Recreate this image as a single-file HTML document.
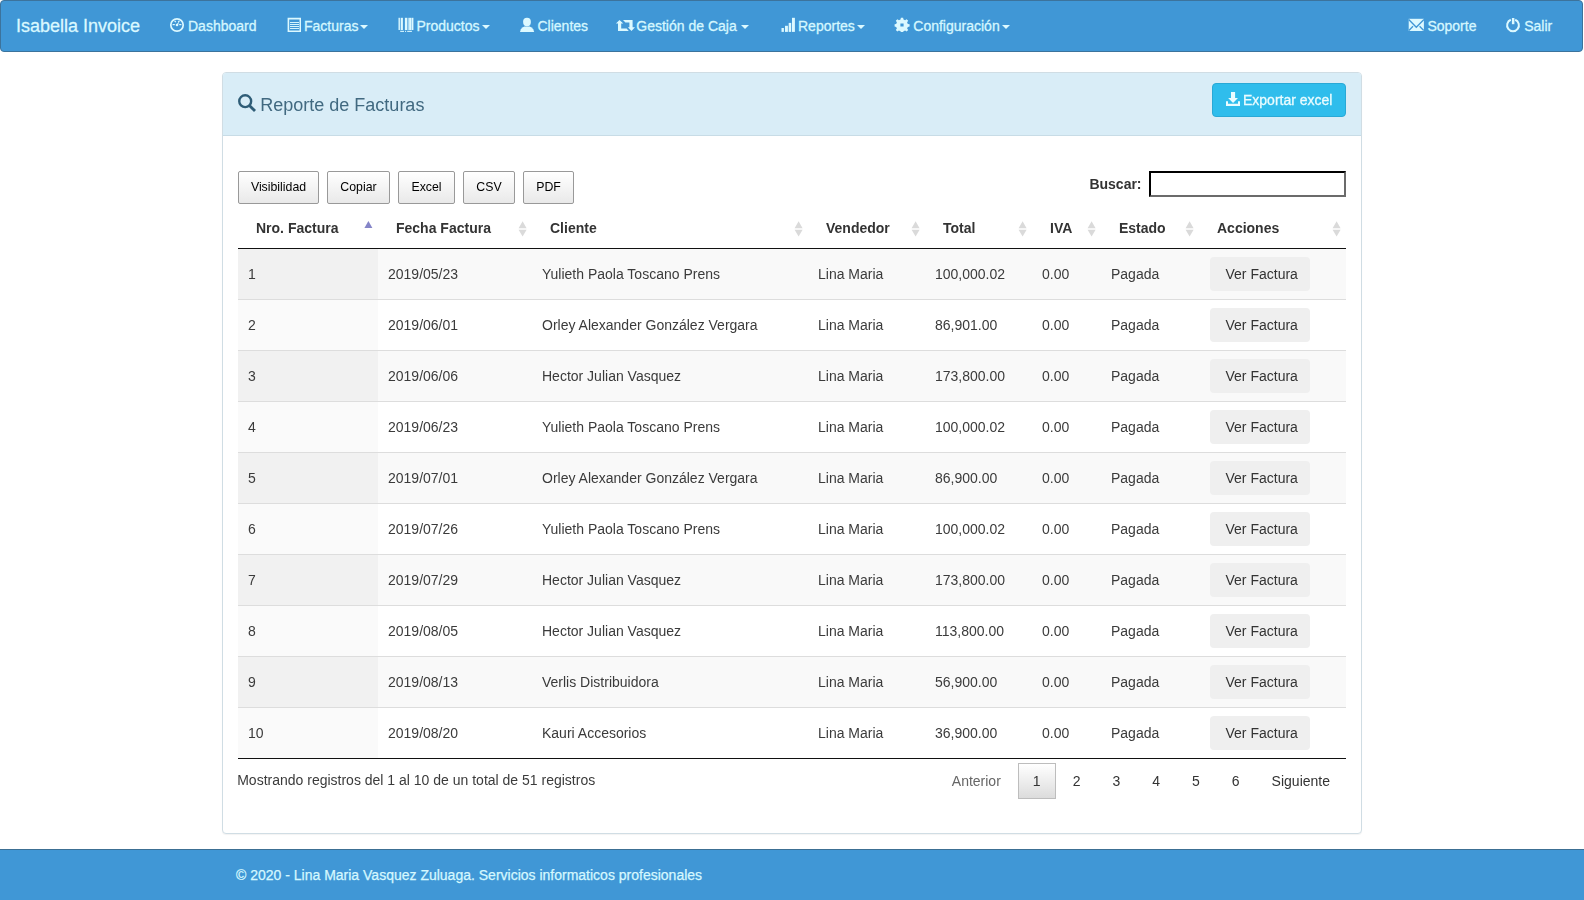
<!DOCTYPE html>
<html><head><meta charset="utf-8">
<style>
*{box-sizing:border-box;}
html,body{margin:0;padding:0;}
body{width:1584px;height:900px;overflow:hidden;position:relative;background:#fff;font-family:"Liberation Sans",sans-serif;font-size:14px;line-height:20px;color:#333;}
.navbar{position:absolute;left:0;top:0;width:1583px;height:52px;background:#4097d6;border:1px solid #3c739c;border-radius:4px;}
.nav{-webkit-text-stroke:0.3px #d6f7ff;position:absolute;top:16px;height:20px;line-height:20px;color:#d4f8ff;white-space:nowrap;font-size:14px;}
.brand{-webkit-text-stroke:0.3px #d6f7ff;position:absolute;top:15px;left:15px;line-height:20px;font-size:18px;color:#dcf9ff;white-space:nowrap;}
.ic{display:inline-block;width:14px;height:14px;vertical-align:top;position:relative;top:2px;}
.caret{display:inline-block;width:0;height:0;margin-left:2px;vertical-align:middle;border-top:4px solid #dcf9ff;border-right:4px solid transparent;border-left:4px solid transparent;}
.panel{position:absolute;left:222px;top:72px;width:1140px;height:762px;border:1px solid #d0dde4;border-radius:4px;background:#fff;box-shadow:0 1px 1px rgba(0,0,0,.05);}
.ph{position:absolute;left:223px;top:73px;width:1138px;height:63px;background:#d9edf7;border-bottom:1px solid #c8dce6;border-radius:3px 3px 0 0;}
.ptitle{position:absolute;left:260.3px;top:94.5px;font-size:18px;line-height:20px;color:#416980;white-space:nowrap;}
.btninfo{position:absolute;left:1212px;top:83px;width:134px;height:34px;background:#2fbdec;border:1px solid #29a9d6;border-radius:4px;}
.btntext{-webkit-text-stroke:0.3px #eafcff;position:absolute;left:1243px;top:90px;line-height:20px;color:#eafcff;white-space:nowrap;}
.dtb{position:absolute;top:171px;height:33px;border:1px solid #999;border-radius:2px;background:linear-gradient(to bottom,#fff 0%,#e9e9e9 100%);font-size:12.32px;line-height:19.7px;padding:6px 0;color:#000;white-space:nowrap;text-align:center;}
.flt{position:absolute;top:173.65px;left:1089.4px;font-weight:bold;white-space:nowrap;line-height:20px;color:#333;}
.inp{position:absolute;left:1149px;top:171px;width:197px;height:26px;border:2px solid #000;border-right-color:#6b6b6b;border-bottom-color:#6b6b6b;background:#fff;}
table.dt{position:absolute;left:238px;top:208px;width:1108px;border-collapse:separate;border-spacing:0;table-layout:fixed;}
table.dt th{font-weight:bold;text-align:left;padding:10px 18px;height:41px;border-bottom:1px solid #111;position:relative;line-height:20px;}
table.dt td{color:#3b3b3b;padding:8px 10px;height:50px;vertical-align:middle;border-top:1px solid #ddd;line-height:20px;white-space:nowrap;}
table.dt tbody tr:first-child td{border-top:none;height:50px;}
table.dt tbody tr:not(:first-child) td{height:51px;}
table.dt tr.odd{background:#f9f9f9;}
table.dt tr.odd td.s1{background:#f1f1f1;}
table.dt tr.even td.s1{background:#fafafa;}
table.dt tbody tr:last-child td{border-bottom:1px solid #111;height:52px;}
.vb{display:inline-block;margin-left:1px;width:100px;height:34px;background:#efefef;border-radius:4px;padding:7px 0 7px 15.5px;line-height:20px;color:#333;white-space:nowrap;}
.sort{position:absolute;right:0;top:11px;width:19px;height:19px;}
.info{color:#3b3b3b;position:absolute;left:237.2px;top:769.6px;line-height:20px;white-space:nowrap;}
.pgw{position:absolute;right:239px;top:763px;display:flex;}
.pg{display:inline-block;min-width:21px;height:36px;padding:7px 14px;margin-left:2px;border:1px solid transparent;border-radius:2px;line-height:20px;color:#333;white-space:nowrap;text-align:center;}
.pg.dis{color:#666;}
.pg.cur{border:1px solid #bdbdbd;border-radius:0;background:linear-gradient(to bottom,#fff 0%,#dcdcdc 100%);}
.footer{position:absolute;left:0;top:849px;width:1584px;height:51px;background:#4097d6;border-top:1px solid #3c6f93;}
.ftext{-webkit-text-stroke:0.25px #dcf9ff;position:absolute;left:236px;top:864.5px;color:#d2f8ff;white-space:nowrap;line-height:20px;}
.wrap{position:absolute;left:0;top:0;width:1584px;height:900px;will-change:transform;}
</style></head><body>
<div class="navbar">
  <div class="brand">Isabella Invoice</div>
</div>
<svg class="navsvg" width="1584" height="52" viewBox="0 0 1584 52" style="position:absolute;left:0;top:0" fill="#dcf9ff">
<!-- dashboard -->
<circle cx="177" cy="25" r="6.2" fill="none" stroke="#dcf9ff" stroke-width="1.7"/>
<rect x="172.6" y="24" width="2.2" height="1.2"/>
<rect x="179.2" y="24" width="2.2" height="1.2"/>
<path d="M174.2,21.4 l0.9,-0.9 l1.2,1.2 l-0.9,0.9z M179.8,21.4 l-0.9,-0.9 l-1.2,1.2 l0.9,0.9z"/>
<circle cx="177" cy="25" r="1.3"/>
<path d="M176.3,24.6 L177.6,25.4 L179.6,21.2 Z"/>
<!-- list-alt -->
<path fill-rule="evenodd" d="M287.6,17.8 H301 V32 H287.6 Z M289.2,19.6 V30.5 H299.5 V19.6 Z"/>
<rect x="290" y="22" width="9" height="1" shape-rendering="crispEdges" opacity="0.95"/>
<rect x="290" y="24" width="9" height="1" shape-rendering="crispEdges" opacity="0.95"/>
<rect x="290" y="26" width="9" height="1" shape-rendering="crispEdges" opacity="0.95"/>
<rect x="290" y="28" width="9" height="1" shape-rendering="crispEdges" opacity="0.95"/>
<!-- barcode -->
<rect x="398.5" y="17.8" width="1.4" height="12.2"/>
<rect x="400.7" y="17.8" width="2.2" height="12.2"/>
<rect x="404.9" y="17.8" width="2.2" height="12.2"/>
<rect x="407.7" y="17.8" width="0.9" height="12.2"/>
<rect x="409.1" y="17.8" width="1.9" height="12.2"/>
<rect x="411.4" y="17.8" width="2" height="12.2"/>
<rect x="400.2" y="30.8" width="3.8" height="1.1"/>
<rect x="405" y="30.8" width="1.1" height="1.1"/>
<rect x="407.2" y="30.8" width="4.7" height="1.1"/>
<!-- user -->
<ellipse cx="527" cy="22" rx="3.9" ry="4.2"/>
<path d="M520,32 L534.2,32 L533.2,29.2 Q532,27.4 529.6,26.6 L524.4,26.6 Q522,27.4 520.9,29.2 Z"/>
<!-- retweet -->
<path d="M619.5,19.9 L623.3,23.6 L621.2,23.6 L621.2,28.4 L626.6,28.4 L628.8,31 L618,31 L618,23.6 L615.9,23.6 Z"/>
<path d="M631.5,31 L635,27.3 L632.6,27.3 L632.6,19.9 L623,19.9 L625.4,22.5 L629.4,22.5 L629.4,27.3 L627.8,27.3 Z"/>
<!-- signal -->
<rect x="781.5" y="28" width="2.4" height="3.9"/>
<rect x="785" y="25.8" width="2.9" height="6.1"/>
<rect x="788.7" y="22.9" width="2.5" height="9"/>
<rect x="792" y="17.8" width="2.9" height="14.1"/>
<!-- cog -->
<path fill-rule="evenodd" d="M900.9,17.8 H903.1 L903.5,19.6 L905.1,20.3 L906.6,19.2 L908.2,20.8 L907.1,22.3 L907.8,23.9 L909.6,24.3 V26.5 L907.8,26.9 L907.1,28.5 L908.2,30 L906.6,31.6 L905.1,30.5 L903.5,31.2 L903.1,32 H900.9 L900.5,31.2 L898.9,30.5 L897.4,31.6 L895.8,30 L896.9,28.5 L896.2,26.9 L894.6,26.5 V24.3 L896.2,23.9 L896.9,22.3 L895.8,20.8 L897.4,19.2 L898.9,20.3 L900.5,19.6 Z M900.4,23.5 H903.6 V26.5 H900.4 Z"/>
<!-- envelope -->
<path d="M1408.7,18.8 H1423.9 V31 H1408.7 Z" />
<path d="M1408.7,19.6 L1416.3,27.2 L1423.9,19.6 M1408.9,30.4 L1413,26.3 M1423.7,30.4 L1419.6,26.3" fill="none" stroke="#4097d6" stroke-width="1.35"/>
<!-- off -->
<path d="M1510.8,19.8 A5.9,5.9 0 1 0 1515.2,19.8" fill="none" stroke="#dcf9ff" stroke-width="2"/>
<rect x="1511.9" y="18" width="2.5" height="6.2"/>
</svg>
<div class="nav" style="left:188px">Dashboard</div>
<div class="nav" style="left:304px">Facturas<span class="caret"></span></div>
<div class="nav" style="left:416.5px">Productos<span class="caret"></span></div>
<div class="nav" style="left:537.5px">Clientes</div>
<div class="nav" style="left:636.3px">Gestión de Caja <span class="caret" style="margin-left:0;border-width:4.5px 4.5px 0 4.5px"></span></div>
<div class="nav" style="left:798px">Reportes<span class="caret"></span></div>
<div class="nav" style="left:913.3px">Configuración<span class="caret"></span></div>
<div class="nav" style="left:1427.4px">Soporte</div>
<div class="nav" style="left:1524.2px">Salir</div>

<div class="wrap">
<div class="panel"></div>
<div class="ph"></div>
<svg width="20" height="20" viewBox="0 0 20 20" style="position:absolute;left:237px;top:93px">
<circle cx="8.2" cy="8.2" r="5.95" fill="none" stroke="#2f5d77" stroke-width="2.4"/>
<path d="M11.4,13.4 L13.4,11.4 L19,17 L17,19Z" fill="#2f5d77"/>
</svg>
<div class="ptitle">Reporte de Facturas</div>
<div class="btninfo"></div>
<svg width="16" height="16" viewBox="0 0 16 16" style="position:absolute;left:1225px;top:90px" fill="#eafcff">
<path d="M6,2 H10.1 V8 H13 L8.05,13 L3.1,8 H6Z"/>
<path d="M1,11.3 H3 V13.8 H13 V11.3 H15 V15.9 H1Z"/>
</svg>
<div class="btntext">Exportar excel</div>
<div class="dtb" style="left:238px;width:81px">Visibilidad</div>
<div class="dtb" style="left:327px;width:63px">Copiar</div>
<div class="dtb" style="left:398px;width:57px">Excel</div>
<div class="dtb" style="left:463px;width:52px">CSV</div>
<div class="dtb" style="left:523px;width:51px">PDF</div>
<div class="flt">Buscar:</div>
<div class="inp"></div>
<table class="dt"><thead><tr><th style="width:140px">Nro. Factura<svg class="sort" width="19" height="19" viewBox="0 0 19 19"><path d="M9.4,2 L13.4,9 L5.4,9Z" fill="#8585c8"/></svg></th><th style="width:154px">Fecha Factura<svg class="sort" width="19" height="19" viewBox="0 0 19 19"><path d="M9.6,2.2 L13.6,9.2 L5.6,9.2Z M5.6,10.7 L13.6,10.7 L9.6,17.4Z" fill="#dadada"/></svg></th><th style="width:276px">Cliente<svg class="sort" width="19" height="19" viewBox="0 0 19 19"><path d="M9.6,2.2 L13.6,9.2 L5.6,9.2Z M5.6,10.7 L13.6,10.7 L9.6,17.4Z" fill="#dadada"/></svg></th><th style="width:117px">Vendedor<svg class="sort" width="19" height="19" viewBox="0 0 19 19"><path d="M9.6,2.2 L13.6,9.2 L5.6,9.2Z M5.6,10.7 L13.6,10.7 L9.6,17.4Z" fill="#dadada"/></svg></th><th style="width:107px">Total<svg class="sort" width="19" height="19" viewBox="0 0 19 19"><path d="M9.6,2.2 L13.6,9.2 L5.6,9.2Z M5.6,10.7 L13.6,10.7 L9.6,17.4Z" fill="#dadada"/></svg></th><th style="width:69px">IVA<svg class="sort" width="19" height="19" viewBox="0 0 19 19"><path d="M9.6,2.2 L13.6,9.2 L5.6,9.2Z M5.6,10.7 L13.6,10.7 L9.6,17.4Z" fill="#dadada"/></svg></th><th style="width:98px">Estado<svg class="sort" width="19" height="19" viewBox="0 0 19 19"><path d="M9.6,2.2 L13.6,9.2 L5.6,9.2Z M5.6,10.7 L13.6,10.7 L9.6,17.4Z" fill="#dadada"/></svg></th><th style="width:147px">Acciones<svg class="sort" width="19" height="19" viewBox="0 0 19 19"><path d="M9.6,2.2 L13.6,9.2 L5.6,9.2Z M5.6,10.7 L13.6,10.7 L9.6,17.4Z" fill="#dadada"/></svg></th></tr></thead><tbody>
<tr class="odd"><td class="s1">1</td><td>2019/05/23</td><td>Yulieth Paola Toscano Prens</td><td>Lina Maria</td><td>100,000.02</td><td>0.00</td><td>Pagada</td><td><span class="vb">Ver Factura</span></td></tr>
<tr class="even"><td class="s1">2</td><td>2019/06/01</td><td>Orley Alexander González Vergara</td><td>Lina Maria</td><td>86,901.00</td><td>0.00</td><td>Pagada</td><td><span class="vb">Ver Factura</span></td></tr>
<tr class="odd"><td class="s1">3</td><td>2019/06/06</td><td>Hector Julian Vasquez</td><td>Lina Maria</td><td>173,800.00</td><td>0.00</td><td>Pagada</td><td><span class="vb">Ver Factura</span></td></tr>
<tr class="even"><td class="s1">4</td><td>2019/06/23</td><td>Yulieth Paola Toscano Prens</td><td>Lina Maria</td><td>100,000.02</td><td>0.00</td><td>Pagada</td><td><span class="vb">Ver Factura</span></td></tr>
<tr class="odd"><td class="s1">5</td><td>2019/07/01</td><td>Orley Alexander González Vergara</td><td>Lina Maria</td><td>86,900.00</td><td>0.00</td><td>Pagada</td><td><span class="vb">Ver Factura</span></td></tr>
<tr class="even"><td class="s1">6</td><td>2019/07/26</td><td>Yulieth Paola Toscano Prens</td><td>Lina Maria</td><td>100,000.02</td><td>0.00</td><td>Pagada</td><td><span class="vb">Ver Factura</span></td></tr>
<tr class="odd"><td class="s1">7</td><td>2019/07/29</td><td>Hector Julian Vasquez</td><td>Lina Maria</td><td>173,800.00</td><td>0.00</td><td>Pagada</td><td><span class="vb">Ver Factura</span></td></tr>
<tr class="even"><td class="s1">8</td><td>2019/08/05</td><td>Hector Julian Vasquez</td><td>Lina Maria</td><td>113,800.00</td><td>0.00</td><td>Pagada</td><td><span class="vb">Ver Factura</span></td></tr>
<tr class="odd"><td class="s1">9</td><td>2019/08/13</td><td>Verlis Distribuidora</td><td>Lina Maria</td><td>56,900.00</td><td>0.00</td><td>Pagada</td><td><span class="vb">Ver Factura</span></td></tr>
<tr class="even"><td class="s1">10</td><td>2019/08/20</td><td>Kauri Accesorios</td><td>Lina Maria</td><td>36,900.00</td><td>0.00</td><td>Pagada</td><td><span class="vb">Ver Factura</span></td></tr>
</tbody></table>
<div class="info">Mostrando registros del 1 al 10 de un total de 51 registros</div>
<div class="pgw"><span class="pg dis">Anterior</span><span class="pg cur">1</span><span class="pg">2</span><span class="pg">3</span><span class="pg">4</span><span class="pg">5</span><span class="pg">6</span><span class="pg">Siguiente</span></div>
</div>
<div class="footer"></div>
<div class="ftext">© 2020 - Lina Maria Vasquez Zuluaga. Servicios informaticos profesionales</div>
</body></html>
